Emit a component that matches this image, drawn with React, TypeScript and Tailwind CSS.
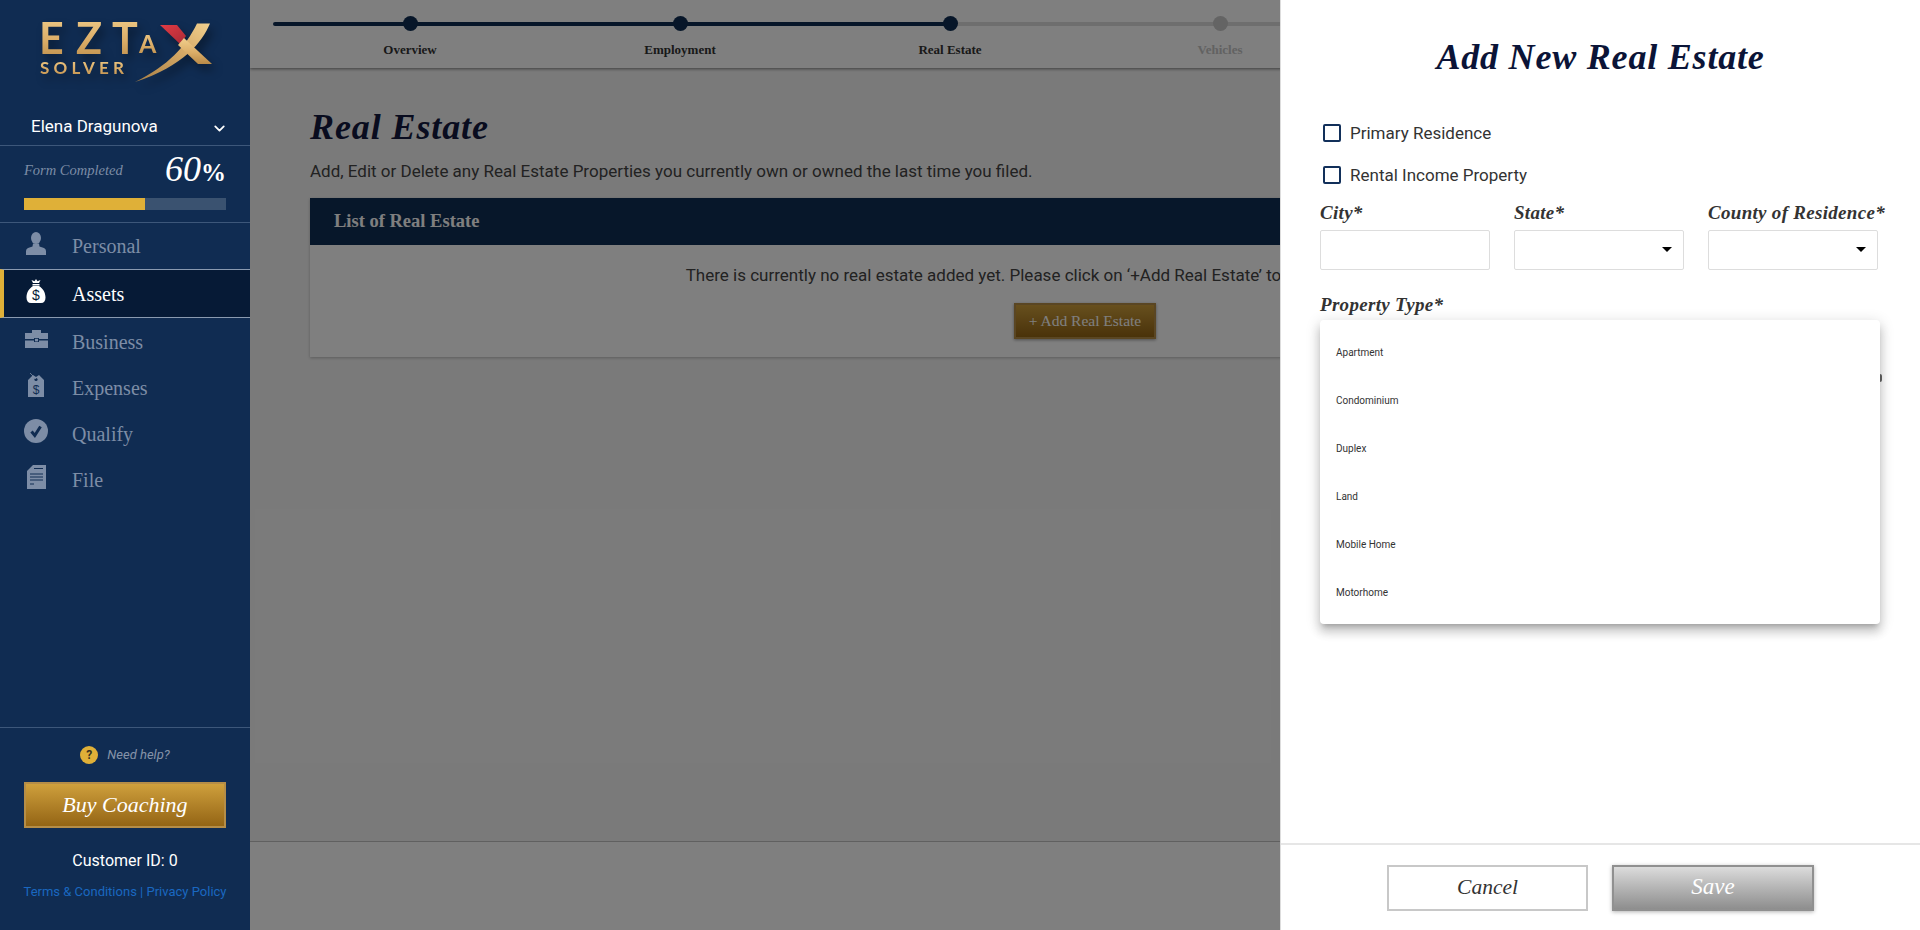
import { ChevronDown } from 'lucide-react'

const SERIF = 'font-["Liberation_Serif",serif]'

const STEPS = [
  { label: 'Overview', left: true, right: true, done: true },
  { label: 'Employment', left: true, right: true, done: true },
  { label: 'Real Estate', left: true, right: false, done: true },
  { label: 'Vehicles', left: false, right: false, done: false },
]

const PROPERTY_TYPES = ['Apartment', 'Condominium', 'Duplex', 'Land', 'Mobile Home', 'Motorhome']

function Logo() {
  return (
    <svg viewBox="0 0 250 100" className="block h-[100px] w-[250px] shrink-0 drop-shadow-[4px_6px_5px_rgba(0,0,0,0.35)]">
      <defs>
        <linearGradient id="gold" x1="0" y1="0" x2="0" y2="1">
          <stop offset="0" stopColor="#f1cf8d" />
          <stop offset="0.55" stopColor="#dcae68" />
          <stop offset="1" stopColor="#b98a48" />
        </linearGradient>
        <linearGradient id="swoosh" x1="0" y1="1" x2="1" y2="0">
          <stop offset="0" stopColor="#a87f45" />
          <stop offset="0.6" stopColor="#d7ab68" />
          <stop offset="1" stopColor="#f0d08f" />
        </linearGradient>
        <linearGradient id="red" x1="0" y1="0" x2="1" y2="1">
          <stop offset="0" stopColor="#e23b44" />
          <stop offset="1" stopColor="#a92a36" />
        </linearGradient>
      </defs>
      <g fontFamily="Lato, sans-serif" fill="url(#gold)">
        <text x="39" y="54" fontSize="43" fontWeight="700">E</text>
        <text x="76" y="54" fontSize="43" fontWeight="700">Z</text>
        <text x="112" y="54" fontSize="43" fontWeight="700">T</text>
        <text x="139" y="53" fontSize="25" fontWeight="700">A</text>
        <text x="40" y="74" fontSize="17" fontWeight="700" letterSpacing="4.2">SOLVER</text>
      </g>
      <path d="M160 25 L177 25 L186 36 L180 44 Z" fill="url(#red)" />
      <path d="M197 23.5 L210 23.5 C202 42 184 66 135 82 C168 66 186 46 197 23.5 Z" fill="url(#swoosh)" />
      <path d="M184 38 L212 64 L198 64 L178 45 Z" fill="url(#gold)" />
    </svg>
  )
}

function PersonIcon({ className }: { className: string }) {
  return (
    <svg viewBox="0 0 20 23" className={className} fill="currentColor">
      <ellipse cx="10" cy="6" rx="5" ry="6" />
      <path d="M7 11.5 L13 11.5 L13.5 14.5 L18 16 Q20 16.8 20 19 L20 23 L0 23 L0 19 Q0 16.8 2 16 L6.5 14.5 Z" />
    </svg>
  )
}

function BagIcon({ className }: { className: string }) {
  return (
    <svg viewBox="0 0 20 24" className={className}>
      <path fill="currentColor" d="M5.5 1 L8.5 2.2 L10 0 L11.5 2.2 L14.5 1 L13 4 L7 4 Z M6.5 5 H13.5 V6.4 H6.5 Z M7 7 H13 C17 9.5 19.5 13.5 19.5 18.5 C19.5 22 18 24 15 24 H5 C2 24 0.5 22 0.5 18.5 C0.5 13.5 3 9.5 7 7 Z" />
      <text x="10" y="20.5" textAnchor="middle" fontSize="14" fontFamily="Liberation Sans, sans-serif" fill="#061a36">$</text>
    </svg>
  )
}

function BriefcaseIcon({ className }: { className: string }) {
  return (
    <svg viewBox="0 0 23 18" className={className} fill="currentColor">
      <path d="M7 0 H16 V3 H23 V9 H14 V8 H9 V9 H0 V3 H7 Z" />
      <path d="M0 10.5 H9 V12 H14 V10.5 H23 V18 H0 Z" />
      <rect x="10" y="8.8" width="3" height="2.6" />
    </svg>
  )
}

function TagIcon({ className }: { className: string }) {
  return (
    <svg viewBox="0 0 16 24" className={className}>
      <path fill="currentColor" d="M5 2 L8 4 L11 2 L16 7 V24 H0 V7 Z" />
      <circle cx="8" cy="6.5" r="1.6" fill="#102c52" />
      <path d="M8 6 L2 0" stroke="currentColor" strokeWidth="0.8" />
      <text x="8" y="21" textAnchor="middle" fontSize="12" fontFamily="Liberation Sans, sans-serif" fill="#102c52">$</text>
    </svg>
  )
}

function CheckIcon({ className }: { className: string }) {
  return (
    <svg viewBox="0 0 24 24" className={className}>
      <circle cx="12" cy="12" r="12" fill="currentColor" />
      <path d="M7.5 12.5 L10.8 16.5 L16.5 7.5" fill="none" stroke="#102c52" strokeWidth="3" />
    </svg>
  )
}

function FileIcon({ className }: { className: string }) {
  return (
    <svg viewBox="0 0 19 24" className={className}>
      <path fill="currentColor" d="M6 0 H19 V24 H0 V6 Z" />
      <path d="M7 3.5 H16 M3 9 H16 M3 12 H16 M3 15 H16 M3 19 H7" stroke="#102c52" strokeWidth="1" />
    </svg>
  )
}

function NavItem({ label, icon, active }: { label: string; icon: React.ReactNode; active?: boolean }) {
  if (active) {
    return (
      <div className="mb-px flex h-[49px] items-center border-y border-[#8a9ab0] border-l-4 border-l-[#dfb038] bg-[#061a36] text-white">
        <div className="mb-[6px] flex w-[68px] justify-center pr-[5px]">{icon}</div>
        <span className={`${SERIF} text-[20px]`}>{label}</span>
      </div>
    )
  }
  return (
    <div className="flex h-[46px] items-center text-[#7d8da6]">
      <div className="mb-[6px] flex w-[72px] justify-center">{icon}</div>
      <span className={`${SERIF} text-[20px]`}>{label}</span>
    </div>
  )
}

function Sidebar() {
  return (
    <aside className="relative z-10 flex h-full w-[250px] shrink-0 flex-col bg-[#102c52] font-['Roboto',sans-serif]">
      <Logo />
      <div className="flex h-[46px] items-center justify-between border-b border-[#3d577a] pl-[31px] pr-[22px] pt-[9px] text-white">
        <span className="text-[17px]">Elena Dragunova</span>
        <ChevronDown size={17} strokeWidth={2.5} className="mt-[2px]" />
      </div>
      <div className="h-[77px] border-b border-[#3d577a] px-6 pt-[4px]">
        <div className="flex h-[42px] items-center justify-between">
          <span className={`${SERIF} text-[14.5px] italic text-[#7d8da6]`}>Form Completed</span>
          <span className={`${SERIF} text-[36px] italic leading-[42px] text-white`}>
            60<span className="text-[25px] font-bold not-italic">%</span>
          </span>
        </div>
        <div className="mt-[6px] h-3 bg-[#3a5270]">
          <div className="h-full w-[60%] bg-[#dfb038]" />
        </div>
      </div>
      <NavItem label="Personal" icon={<PersonIcon className="h-[23px] w-5" />} />
      <NavItem label="Assets" active icon={<BagIcon className="h-6 w-5" />} />
      <NavItem label="Business" icon={<BriefcaseIcon className="h-[18px] w-[23px]" />} />
      <NavItem label="Expenses" icon={<TagIcon className="h-6 w-4" />} />
      <NavItem label="Qualify" icon={<CheckIcon className="h-6 w-6" />} />
      <NavItem label="File" icon={<FileIcon className="h-6 w-[19px]" />} />

      <div className="mt-auto flex h-[203px] flex-col items-center border-t border-[#3d577a] px-6">
        <div className="mt-[18px] flex h-[18px] items-center gap-[9px]">
          <span className="flex h-[18px] w-[18px] items-center justify-center rounded-full bg-[#dfb038] text-[12px] font-bold text-[#3a3220]">?</span>
          <span className="text-[13px] italic text-[#8593a8]">Need help?</span>
        </div>
        <button className={`${SERIF} mt-[18px] h-[46px] w-[202px] border-2 border-[#b58d47] bg-gradient-to-b from-[#cfa03c] to-[#946514] pb-[2px] text-[22px] italic text-white`}>
          Buy Coaching
        </button>
        <p className="mt-[22px] text-[16px] leading-[22px] text-white">Customer ID: 0</p>
        <p className="mt-[12px] whitespace-nowrap text-[13px] leading-[16px] text-[#1a68c0]">Terms &amp; Conditions | Privacy Policy</p>
      </div>
    </aside>
  )
}

function Stepper() {
  return (
    <div className="relative z-0 flex h-[68px] shrink-0 bg-white px-[25px] shadow-[0_1px_3px_rgba(0,0,0,0.5)]">
      {STEPS.map((step, i) => (
        <div key={step.label} className="relative flex w-[270px] flex-col items-center">
          <div className={`absolute top-[22px] h-1 ${i === 0 ? '-left-[2px] w-[137px] rounded-l-full' : 'left-0 w-1/2'} ${step.left ? 'bg-[#0f2d52]' : 'bg-[#dcdcdc]'}`} />
          <div className={`absolute left-1/2 top-[22px] h-1 w-1/2 ${step.right ? 'bg-[#0f2d52]' : 'bg-[#dcdcdc]'}`} />
          <div className={`relative mt-4 h-[15px] w-[15px] rounded-full ${step.done ? 'bg-[#0f2d52]' : 'bg-[#c8c8c8]'}`} />
          <span className={`${SERIF} mt-[10px] text-[13px] font-bold leading-[18px] ${step.done ? 'text-[#333]' : 'text-[#c4c4c4]'}`}>
            {step.label}
          </span>
        </div>
      ))}
    </div>
  )
}

function Main() {
  return (
    <main className="relative flex h-full min-w-0 flex-1 flex-col bg-[#f5f5f5] font-['Roboto',sans-serif]">
      <Stepper />
      <div className="flex-1 px-[60px] pt-[40px]">
        <h1 className={`${SERIF} text-[36px] font-bold italic leading-[38px] tracking-[0.9px] text-[#12193f]`}>Real Estate</h1>
        <p className="mt-[13px] text-[17px] leading-[24px] text-[#444]">
          Add, Edit or Delete any Real Estate Properties you currently own or owned the last time you filed.
        </p>
        <div className="mt-[15px] h-[159px] bg-white shadow-[0_1px_3px_rgba(0,0,0,0.25)]">
          <div className={`${SERIF} flex h-[47px] items-center bg-[#0f2f55] pl-6 text-[18.5px] font-bold text-white`}>
            List of Real Estate
          </div>
          <div className="flex flex-col items-center pt-[18px]">
            <p className="whitespace-nowrap pl-[3px] text-[17px] leading-[24px] text-[#444]">
              There is currently no real estate added yet. Please click on ‘+Add Real Estate’ to add a new property record.
            </p>
            <button className={`${SERIF} mt-[16px] h-9 w-[142px] border-2 border-[#b58d47] bg-gradient-to-b from-[#cfa03c] to-[#946514] text-[15.5px] text-white shadow-[0_1px_3px_rgba(0,0,0,0.4)]`}>
              + Add Real Estate
            </button>
          </div>
        </div>
      </div>
      <div className="h-[89px] shrink-0 border-t border-[#c0c0c0] bg-white" />
      <div className="absolute inset-0 bg-black/50" />
    </main>
  )
}

function FieldLabel({ children }: { children: React.ReactNode }) {
  return <label className={`${SERIF} block whitespace-nowrap text-[19px] font-bold italic leading-[22px] tracking-[0.3px] text-[#333]`}>{children}</label>
}

function SelectBox() {
  return (
    <div className="flex h-10 items-center justify-end rounded-[2px] border border-[#ddd] bg-white pr-[11px]">
      <span className="mt-[-1px] h-0 w-0 border-x-[5px] border-t-[5px] border-x-transparent border-t-black" />
    </div>
  )
}

function CheckRow({ label }: { label: string }) {
  return (
    <label className="flex h-[18px] items-center gap-[9px]">
      <span className="h-[18px] w-[18px] rounded-[2px] border-2 border-[#12305a]" />
      <span className="pt-[2px] text-[17px] text-[#333]">{label}</span>
    </label>
  )
}

function Panel() {
  return (
    <aside className="absolute right-0 top-0 z-20 flex h-full w-[640px] flex-col border-l border-[#ddd] bg-white font-['Roboto',sans-serif]">
      <h2 className={`${SERIF} pt-[37px] text-center text-[36px] font-bold italic leading-[40px] tracking-[0.8px] text-[#0b1437]`}>Add New Real Estate</h2>
      <div className="flex-1 px-[39px]">
        <div className="flex flex-col gap-6 pl-[3px] pt-[47px]">
          <CheckRow label="Primary Residence" />
          <CheckRow label="Rental Income Property" />
        </div>
        <div className="mt-[18px] grid grid-cols-[170px_170px_170px] gap-x-6">
          <div>
            <FieldLabel>City*</FieldLabel>
            <div className="mt-[6px] h-10 rounded-[2px] border border-[#ddd] bg-white" />
          </div>
          <div>
            <FieldLabel>State*</FieldLabel>
            <div className="mt-[6px]"><SelectBox /></div>
          </div>
          <div>
            <FieldLabel>County of Residence*</FieldLabel>
            <div className="mt-[6px]"><SelectBox /></div>
          </div>
        </div>
        <div className="relative mt-6">
          <FieldLabel>Property Type*</FieldLabel>
          {/* sliver of the control behind the open menu */}
          <span className="absolute left-[560px] top-[80px] h-2 w-[2px] rounded-r-full bg-[#666]" />
          <ul className="absolute left-0 top-[26px] z-10 w-[560px] rounded-[4px] bg-white py-2 shadow-[0_5px_5px_-3px_rgba(0,0,0,0.2),0_8px_10px_1px_rgba(0,0,0,0.14),0_3px_14px_2px_rgba(0,0,0,0.12)]">
            {PROPERTY_TYPES.map((type) => (
              <li key={type} className="flex h-12 items-center px-4 text-[10px] text-[#333]">{type}</li>
            ))}
          </ul>
        </div>
      </div>
      <div className="flex h-[87px] shrink-0 items-start justify-center gap-6 border-t-2 border-[#e6e6e6] pt-[20px]">
        <button className={`${SERIF} h-[46px] w-[201px] border-2 border-[#c8c8c8] bg-white pb-[2px] text-[21.5px] italic text-[#333]`}>Cancel</button>
        <button className={`${SERIF} h-[46px] w-[202px] border-2 border-[#909090] bg-gradient-to-b from-[#dcdcdc] to-[#8e8e8e] pb-[2px] text-[23px] italic text-white shadow-[0_1px_4px_rgba(0,0,0,0.3)]`}>Save</button>
      </div>
    </aside>
  )
}

export default function App() {
  return (
    <div className="relative flex h-screen w-full overflow-hidden">
      <Sidebar />
      <Main />
      <Panel />
    </div>
  )
}
